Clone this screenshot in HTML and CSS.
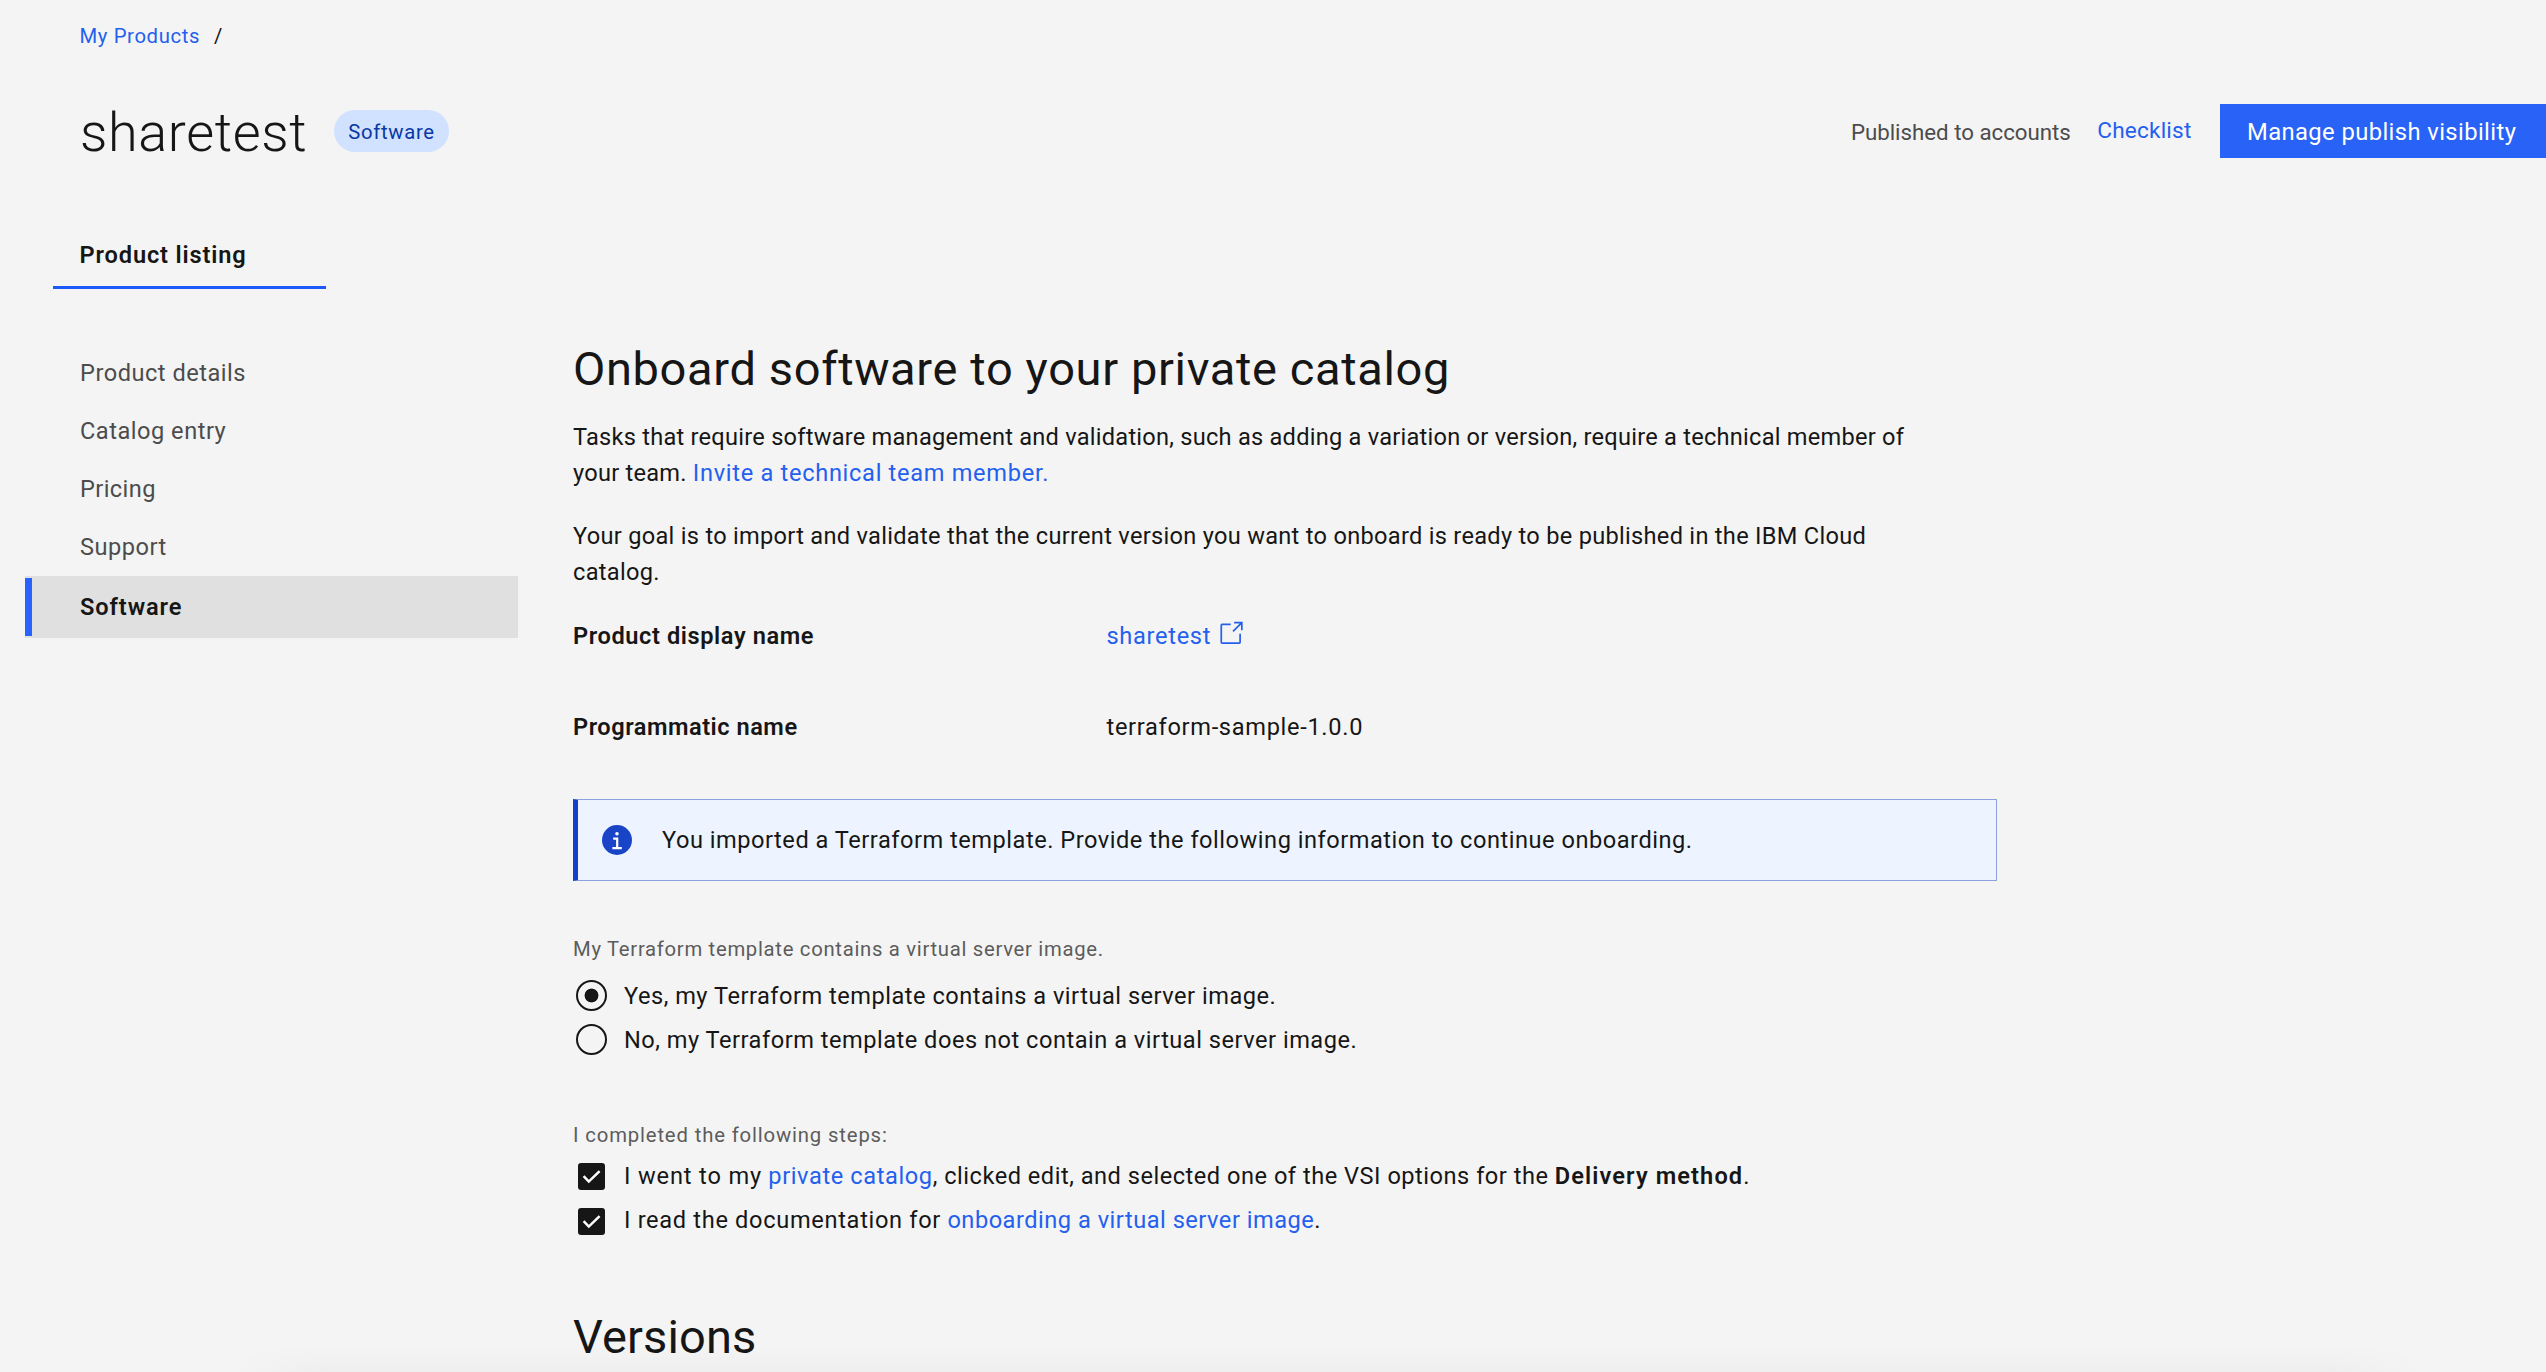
FILE: index.html
```html
<!DOCTYPE html>
<html lang="en">
<head>
<meta charset="utf-8">
<title>sharetest - My Products</title>
<link rel="stylesheet" href="styles.css">
</head>
<body>
<nav class="breadcrumb"><a class="link" href="#">My Products</a><span class="breadcrumb-sep">/</span></nav>
<header class="page-header">
  <h1 class="page-title">sharetest</h1>
  <span class="tag">Software</span>
  <div class="actions">
    <span class="status">Published to accounts</span>
    <a class="link checklist" href="#">Checklist</a>
    <button class="button">Manage publish visibility</button>
  </div>
</header>
<div class="tabs"><a class="tab" href="#">Product listing</a></div>
<div class="columns">
  <nav class="side-nav">
    <a class="side-item w-details" href="#">Product details</a>
    <a class="side-item" href="#">Catalog entry</a>
    <a class="side-item w-pricing" href="#">Pricing</a>
    <a class="side-item" href="#">Support</a>
    <a class="side-item side-item-active" href="#">Software</a>
  </nav>
  <main class="main">
    <h2 class="heading">Onboard software to your private catalog</h2>
    <p class="para">Tasks that require software management and validation, such as adding a variation or version, require a technical member of<br>your team. <a class="link invite" href="#">Invite a technical team member.</a></p>
    <p class="para para-goal">Your goal is to import and validate that the current version you want to onboard is ready to be published in the IBM Cloud<br>catalog.</p>
    <dl class="facts">
      <dt class="fact-name">Product display name</dt>
      <dd class="fact-value"><a class="link fact-link" href="#">sharetest<svg class="launch" viewBox="0 0 32 32"><path fill="currentColor" d="M26 28H6a2 2 0 0 1-2-2V6a2 2 0 0 1 2-2h10v2H6v20h20V16h2v10a2 2 0 0 1-2 2Z"/><path fill="currentColor" d="M20 2v2h6.586L18 12.586 19.414 14 28 5.414V12h2V2Z"/></svg></a></dd>
      <dt class="fact-name fact-name-tight">Programmatic name</dt>
      <dd class="fact-value">terraform-sample-1.0.0</dd>
    </dl>
    <div class="notice">
      <svg class="notice-icon" viewBox="0 0 30 30"><circle cx="15" cy="15" r="15" fill="#1944c8"/><circle cx="15" cy="8.8" r="1.8" fill="#fff"/><path fill="none" stroke="#fff" stroke-width="2.2" d="M11.2 13.6h4v9.6M10.4 23.2h9.4"/></svg>
      <span class="notice-text">You imported a Terraform template. Provide the following information to continue onboarding.</span>
    </div>
    <div class="group group-radio">
      <div class="legend">My Terraform template contains a virtual server image.</div>
      <label class="choice"><span class="radio radio-on"></span><span>Yes, my Terraform template contains a virtual server image.</span></label>
      <label class="choice"><span class="radio"></span><span>No, my Terraform template does not contain a virtual server image.</span></label>
    </div>
    <div class="group group-check">
      <div class="legend legend-steps">I completed the following steps:</div>
      <label class="choice"><span class="check"><svg class="tick" viewBox="0 0 27 27"><path fill="none" stroke="#fff" stroke-width="2.5" d="M5.6 13.2l5.2 5.4L21.6 8.2"/></svg></span><span><span class="w-went">I went to my</span> <a class="link w-catalog" href="#">private catalog</a>, clicked edit, and selected one of the VSI options for the <b class="strong">Delivery method</b>.</span></label>
      <label class="choice"><span class="check"><svg class="tick" viewBox="0 0 27 27"><path fill="none" stroke="#fff" stroke-width="2.5" d="M5.6 13.2l5.2 5.4L21.6 8.2"/></svg></span><span><span class="w-read">I read the documentation for</span> <a class="link" href="#">onboarding a virtual server image</a>.</span></label>
    </div>
    <h2 class="heading heading-versions">Versions</h2>
  </main>
</div>
<div class="bottom-shade"></div>
</body>
</html>
```
FILE: styles.css
```css
* { box-sizing: border-box; }
html, body { height: 1372px; overflow: hidden; }
body {
  position: relative;
  margin: 0;
  padding-top: 16px;
  background: #f4f4f4;
  color: #161616;
  font: 400 23.6px/36.4px "Roboto", "Noto Sans", sans-serif;
  letter-spacing: 0.51px;
}
h1, h2, p, dl, dd { margin: 0; font-weight: 400; }
a { text-decoration: none; color: inherit; }
.link { color: #2460ee; }

.breadcrumb { display: flex; gap: 14px; padding-left: 79.5px; font-size: 20.3px; line-height: 40px; letter-spacing: 0.62px; }

.page-header { display: flex; align-items: center; height: 70px; margin-top: 40px; padding-left: 80px; }
.page-title { padding-top: 4px; font-size: 54px; line-height: 66px; font-weight: 300; letter-spacing: 0.63px; }
.tag { display: flex; align-items: center; height: 42px; margin-left: 27px; padding: 2px 14px 0; border-radius: 21px; background: #d0e2ff; color: #0a38a5; font-size: 20.3px; letter-spacing: 0.68px; }
.actions { display: flex; align-items: center; margin-left: auto; }
.status { padding-top: 2px; color: #4c4c4c; font-size: 22.3px; letter-spacing: -0.02px; }
.checklist { margin-left: 26.5px; font-size: 22.6px; letter-spacing: 0.19px; }
.button { width: 326px; height: 54px; margin-left: 28.5px; padding: 1px 0 0 27px; border: 0; background: #2962f6; color: #fff; font: 400 23.8px/36px "Roboto", sans-serif; letter-spacing: 0.39px; text-align: left; }

.tabs { display: flex; margin: 59px 0 0 53px; }
.tab { width: 273px; height: 64px; padding-left: 26.5px; border-bottom: 3.6px solid #1b5af8; font-weight: 600; line-height: 60px; letter-spacing: 0.86px; }

.columns { display: flex; gap: 55px; padding-left: 25px; }
.side-nav { width: 493px; padding-top: 54px; }
.side-item { display: block; height: 58.25px; padding: 0.6px 0 0 55px; color: #4c4c4c; line-height: 58.25px; }
.w-details { letter-spacing: 0.51px; }
.w-pricing { letter-spacing: 0.41px; }
.side-item-active { height: 61.5px; padding: 1.2px 0 0 55px; background: linear-gradient(#2962fe, #2962fe) 0 2px / 7px 58px no-repeat #e0e0e0; color: #161616; font-weight: 600; line-height: 61.5px; letter-spacing: 0.9px; }

.main { width: 1424px; padding-top: 50px; }
.heading { font-size: 47px; line-height: 60px; letter-spacing: 0.64px; }
.para { margin-top: 19.8px; letter-spacing: 0.245px; white-space: nowrap; }
.invite { letter-spacing: 0.7px; }
.para-goal { margin-top: 26.4px; letter-spacing: 0.29px; }
.facts { display: grid; grid-template-columns: 533.5px 1fr; row-gap: 51px; margin-top: 24.9px; line-height: 40px; }
.fact-name { font-weight: 600; letter-spacing: 0.59px; }
.fact-name-tight { letter-spacing: 0.52px; }
.fact-value { letter-spacing: 0.69px; }
.fact-link { display: flex; align-items: center; gap: 6px; }
.launch { width: 27.4px; height: 27.4px; margin-top: -4px; }

.notice { display: flex; align-items: center; gap: 30px; height: 82px; margin-top: 51.9px; padding-left: 24px; border: 1.6px solid #8ba0df; border-left: 5px solid #1440cc; background: #edf4ff; }
.notice-icon { width: 30px; height: 30px; }
.notice-text { padding-top: 2px; letter-spacing: 0.52px; }

.legend { color: #5c5c5c; font-size: 20.3px; line-height: 28px; letter-spacing: 0.7px; }
.legend-steps { letter-spacing: 0.85px; }
.group-radio { margin-top: 54.8px; }
.group-radio .legend { margin-bottom: 10.2px; }
.group-radio .choice { height: 44px; }
.group-check { margin-top: 59.5px; }
.group-check .choice { height: 44.6px; }
.group-check .legend { margin-bottom: 4.6px; }
.choice { display: flex; align-items: center; white-space: nowrap; }
.choice > :last-child { margin-left: 17px; }
.group-radio .choice > :last-child { padding-top: 2px; }
.radio { width: 31px; height: 31px; margin-left: 3px; border: 2px solid #161616; border-radius: 50%; }
.radio-on { background: radial-gradient(circle, #161616 6.5px, transparent 7.3px); }
.check { width: 27px; height: 27px; margin: 1px 2px 0 5px; border-radius: 3px; background: #161616; }
.tick { display: block; width: 27px; height: 27px; }
.w-went { letter-spacing: 0.85px; }
.w-read { letter-spacing: 0.68px; }
.w-catalog { letter-spacing: 0.6px; }
.strong { font-weight: 600; letter-spacing: 1.1px; }
.heading-versions { margin-top: 64.6px; letter-spacing: 0.11px; }

.bottom-shade { position: absolute; left: 230px; right: 120px; bottom: 0; height: 26px; background: linear-gradient(rgba(0,0,0,0), rgba(0,0,0,0.022)); -webkit-mask-image: linear-gradient(90deg, transparent, #000 100px, #000 calc(100% - 100px), transparent); mask-image: linear-gradient(90deg, transparent, #000 100px, #000 calc(100% - 100px), transparent); }
```
